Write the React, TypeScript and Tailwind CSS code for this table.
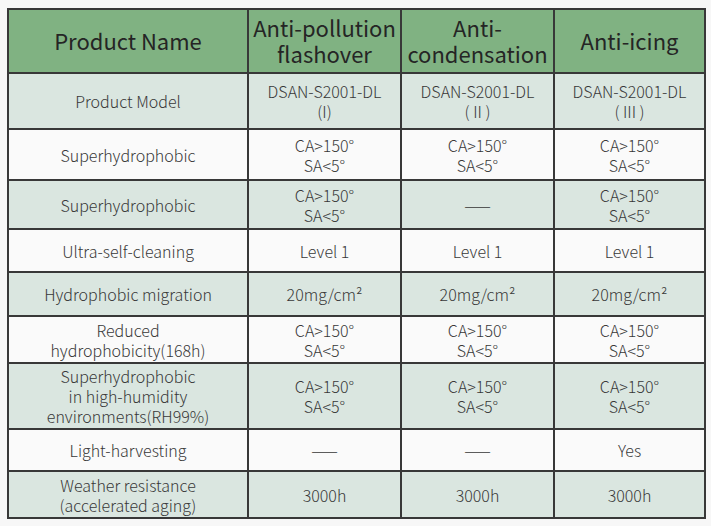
const rows: { label: string[]; cells: string[][]; h: string; tint: boolean }[] = [
  { label: ["Product Model"], cells: [["DSAN-S2001-DL", "(I)"], ["DSAN-S2001-DL", "( II )"], ["DSAN-S2001-DL", "( III )"]], h: "h-[56px]", tint: true },
  { label: ["Superhydrophobic"], cells: [["CA>150°", "SA<5°"], ["CA>150°", "SA<5°"], ["CA>150°", "SA<5°"]], h: "h-[51px]", tint: false },
  { label: ["Superhydrophobic"], cells: [["CA>150°", "SA<5°"], ["——"], ["CA>150°", "SA<5°"]], h: "h-[49px]", tint: true },
  { label: ["Ultra-self-cleaning"], cells: [["Level 1"], ["Level 1"], ["Level 1"]], h: "h-[43px]", tint: false },
  { label: ["Hydrophobic migration"], cells: [["20mg/cm²"], ["20mg/cm²"], ["20mg/cm²"]], h: "h-[44px]", tint: true },
  { label: ["Reduced", "hydrophobicity(168h)"], cells: [["CA>150°", "SA<5°"], ["CA>150°", "SA<5°"], ["CA>150°", "SA<5°"]], h: "h-[47px]", tint: false },
  { label: ["Superhydrophobic", "in high-humidity", "environments(RH99%)"], cells: [["CA>150°", "SA<5°"], ["CA>150°", "SA<5°"], ["CA>150°", "SA<5°"]], h: "h-[66px]", tint: true },
  { label: ["Light-harvesting"], cells: [["——"], ["——"], ["Yes"]], h: "h-[42px]", tint: false },
  { label: ["Weather resistance", "(accelerated aging)"], cells: [["3000h"], ["3000h"], ["3000h"]], h: "h-[47px]", tint: true },
];

function Lines({ lines }: { lines: string[] }) {
  return (
    <>
      {lines.map((l, i) => (
        <div key={i}>{l}</div>
      ))}
    </>
  );
}

export default function App() {
  return (
    <div
      className="w-[711px] h-[526px] bg-[#f7f7f7] pt-[8px] pl-[7px]"
      style={{ fontFamily: '"Noto Sans CJK SC", "Noto Sans", sans-serif' }}
    >
      <table className="table-fixed border-collapse w-[697px] text-[#383838] text-center font-light">
        <colgroup>
          <col className="w-[240px]" />
          <col className="w-[153px]" />
          <col className="w-[153px]" />
          <col className="w-[151px]" />
        </colgroup>
        <thead>
          <tr className="h-[64px] bg-[#80b282] text-[22px] leading-[26px] text-[#252525]">
            <th className="border-2 border-[#383838] font-normal pb-[3px]">Product Name</th>
            <th className="border-2 border-[#383838] font-normal pb-[3px]">
              <div>Anti-pollution</div>
              <div>flashover</div>
            </th>
            <th className="border-2 border-[#383838] font-normal pb-[3px]">
              <div>Anti-</div>
              <div>condensation</div>
            </th>
            <th className="border-2 border-[#383838] font-normal pb-[3px]">Anti-icing</th>
          </tr>
        </thead>
        <tbody className="text-[16px] leading-[20px]">
          {rows.map((r, i) => (
            <tr key={i} className={`${r.h} ${r.tint ? "bg-[#dae6e0]" : "bg-[#fafafa]"}`}>
              <td className="border-2 border-[#383838] p-0">
                <Lines lines={r.label} />
              </td>
              {r.cells.map((c, j) => (
                <td key={j} className="border-2 border-[#383838] p-0">
                  <Lines lines={c} />
                </td>
              ))}
            </tr>
          ))}
        </tbody>
      </table>
    </div>
  );
}
